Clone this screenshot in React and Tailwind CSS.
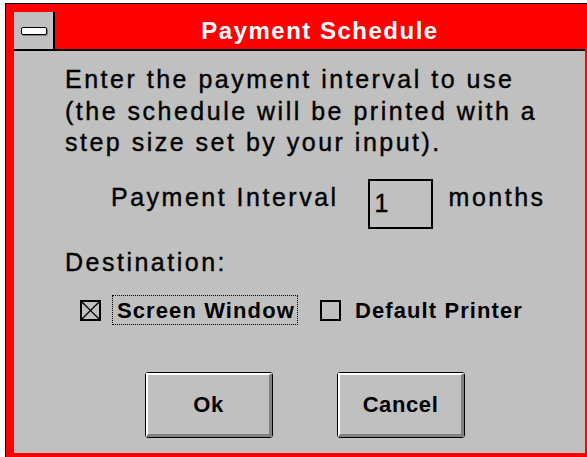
import React from 'react';

const font = { fontFamily: '"Liberation Sans", Arial, sans-serif' };

// Win 3.1 push button: black rounded outline, white top-left bevel, grey bottom-right bevel
const PushButton = ({ label }) => (
    <div className="w-[128px] h-[66px] border border-black rounded-[3px] bg-[#c0c0c0]">
        <div className="w-full h-full border-t-2 border-l-2 border-white border-b-[3px] border-r-[3px] border-b-[#808080] border-r-[#808080] flex items-center justify-center">
            <span className="text-[22px] font-bold text-black tracking-[0.6px]">{label}</span>
        </div>
    </div>
);

const CheckBox = ({ checked }) => (
    <div className="w-[21px] h-[21px] border-2 border-black bg-[#c0c0c0] relative">
        {checked && (
            <svg className="absolute inset-0" width="17" height="17" viewBox="0 0 17 17">
                <path d="M0 0L17 17M17 0L0 17" stroke="#000" strokeWidth="1.3" />
            </svg>
        )}
    </div>
);

const App = () => {
    return (
        <div className="w-[587px] h-[457px] overflow-hidden bg-white" style={font}>
            <div className="ml-[5px] mt-[3px] w-[600px] h-[470px] border border-black bg-[#ff0000] p-[8px]">
                <div className="w-[571px] h-[441px] flex flex-col bg-[#c0c0c0]">
                    {/* title bar */}
                    <div className="h-[39px] flex border-b-2 border-black">
                        <div className="w-[41px] h-full bg-[#c0c0c0] border-r-2 border-black flex items-center justify-center">
                            <div className="w-[26px] h-[8px] bg-white border-[1.5px] border-black rounded-[2px] shadow-[1px_1px_0_#808080]" />
                        </div>
                        <div className="flex-1 bg-[#ff0000] flex items-center justify-center">
                            <span className="text-white font-bold text-[24px] tracking-[1.5px]">Payment Schedule</span>
                        </div>
                    </div>

                    {/* client area, system-font look: regular face with a slight stroke */}
                    <div className="flex-1 flex flex-col text-black text-[25px] tracking-[2.5px] [-webkit-text-stroke:0.4px_black]">
                        <p className="pl-[51px] pt-[13px] leading-[31.5px]">
                            Enter the payment interval to use<br />
                            (the schedule will be printed with a<br />
                            step size set by your input).
                        </p>

                        <div className="flex items-start pl-[97px] mt-[20px] leading-[25px]">
                            <span className="mt-[6px]">Payment Interval</span>
                            <div className="ml-[29px] w-[65px] h-[50px] border-2 border-black pl-[5px] pt-[10px]">
                                <span>1</span>
                            </div>
                            <span className="ml-[16px] mt-[6px]">months</span>
                        </div>

                        <div className="pl-[51px] mt-[21px] leading-[25px]">Destination:</div>

                        <div className="flex items-center pl-[66px] mt-[19px] text-[22px] font-bold tracking-[1.1px] [-webkit-text-stroke:0px]">
                            <CheckBox checked />
                            <div className="ml-[11px] pl-[4px] pr-[2px] h-[30px] border border-dotted border-black flex items-center">
                                Screen Window
                            </div>
                            <div className="ml-[22px]">
                                <CheckBox />
                            </div>
                            <span className="ml-[14px]">Default Printer</span>
                        </div>

                        <div className="flex pl-[131px] mt-[45px] gap-[64px] [-webkit-text-stroke:0px]">
                            <PushButton label="Ok" />
                            <PushButton label="Cancel" />
                        </div>
                    </div>
                </div>
            </div>
        </div>
    );
};

export default App;
